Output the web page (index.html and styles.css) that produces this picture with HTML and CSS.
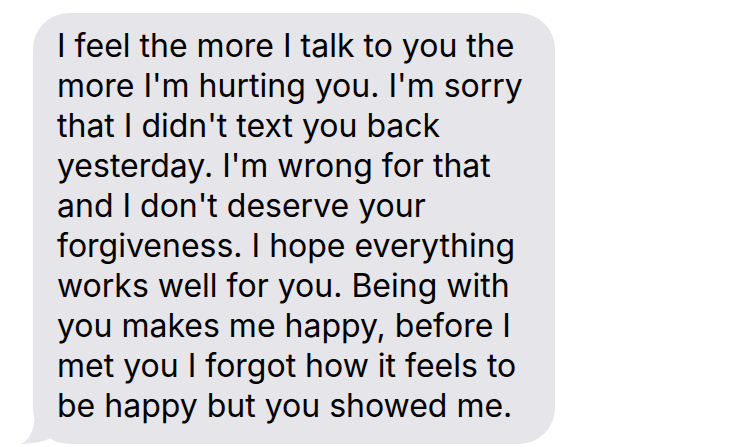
FILE: index.html
```html
<!DOCTYPE html>
<html>
<head>
<meta charset="utf-8">
<link rel="stylesheet" href="styles.css">
</head>
<body>
<div class="thread">
  <div class="bubble">
    <p class="text">I feel the more I talk to you the<br>more I'm hurting you. I'm sorry<br>that I didn't text you back<br>yesterday. I'm wrong for that<br>and I don't deserve your<br>forgiveness. I hope everything<br>works well for you. Being with<br>you makes me happy, before I<br>met you I forgot how it feels to<br>be happy but you showed me.</p>
    <svg class="tail" width="30" height="30" viewBox="0 0 30 30"><path d="M14 0 L30 0 L30 24 C24 27 17 29 0 30 C8 26 13 18 14 0 Z" fill="#e5e5ea"/></svg>
  </div>
</div>
</body>
</html>
```
FILE: styles.css
```css
html, body { margin: 0; padding: 0; background: #fff; }
.thread { padding: 13px 0 0 33px; }
.bubble {
  position: relative;
  width: 522px;
  height: 431px;
  box-sizing: border-box;
  background: #e5e5ea;
  border-radius: 36px;
  padding: 13px 0 0 24px;
}
.text {
  margin: 0;
  font-family: Inter, "Noto Sans", sans-serif;
  font-size: 32px;
  line-height: 40px;
  color: #000;
  letter-spacing: 0;
  white-space: nowrap;
}
.tail { position: absolute; left: -12px; bottom: 0; }
```
